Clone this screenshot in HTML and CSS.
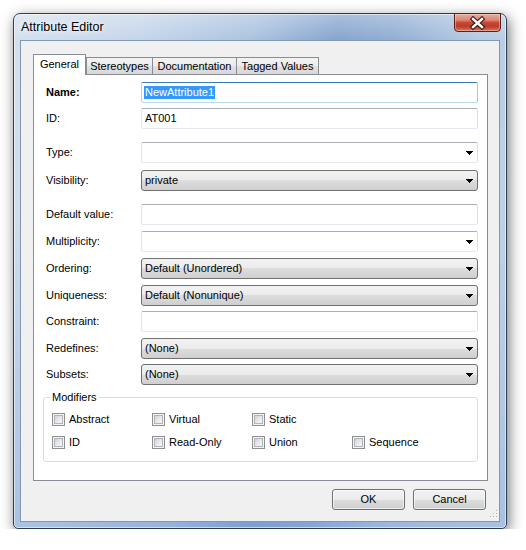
FILE: index.html
```html
<!DOCTYPE html>
<html>
<head>
<meta charset="utf-8">
<title>Attribute Editor</title>
<link rel="stylesheet" href="styles.css">
</head>
<body>
<div class="window">
  <div class="titlebar"><span class="title">Attribute Editor</span></div>
  <div class="close">
    <svg width="45" height="18" viewBox="0 0 45 18">
      <path d="M18 5 L27 13 M27 5 L18 13" stroke="#3a1712" stroke-width="4.6" stroke-linecap="square" fill="none"/>
      <path d="M18 5 L27 13 M27 5 L18 13" stroke="#ffffff" stroke-width="2.4" stroke-linecap="square" fill="none"/>
    </svg>
  </div>
  <div class="client">
    <div class="tabs">
      <div class="tab active w-general">General</div>
      <div class="tab w-stereo">Stereotypes</div>
      <div class="tab w-doc">Documentation</div>
      <div class="tab w-tag">Tagged Values</div>
    </div>
    <div class="panel">
      <div class="row"><span class="lbl bold">Name:</span><div class="field text focus"><span class="sel">NewAttribute1</span></div></div>
      <div class="row"><span class="lbl">ID:</span><div class="field text"><span>AT001</span></div></div>
      <div class="row m8"><span class="lbl">Type:</span><div class="field text"><span></span><svg class="arrow" width="7" height="4" viewBox="0 0 7 4"><path d="M0 0h7v1h-1v1h-1v1h-1v1h-1v-1h-1v-1h-1v-1h-1z"/></svg></div></div>
      <div class="row m2"><span class="lbl">Visibility:</span><div class="field list"><span>private</span><svg class="arrow" width="7" height="4" viewBox="0 0 7 4"><path d="M0 0h7v1h-1v1h-1v1h-1v1h-1v-1h-1v-1h-1v-1h-1z"/></svg></div></div>
      <div class="row m8"><span class="lbl">Default value:</span><div class="field text"></div></div>
      <div class="row m1"><span class="lbl">Multiplicity:</span><div class="field text"><span></span><svg class="arrow" width="7" height="4" viewBox="0 0 7 4"><path d="M0 0h7v1h-1v1h-1v1h-1v1h-1v-1h-1v-1h-1v-1h-1z"/></svg></div></div>
      <div class="row m1"><span class="lbl">Ordering:</span><div class="field list"><span>Default (Unordered)</span><svg class="arrow" width="7" height="4" viewBox="0 0 7 4"><path d="M0 0h7v1h-1v1h-1v1h-1v1h-1v-1h-1v-1h-1v-1h-1z"/></svg></div></div>
      <div class="row m1"><span class="lbl">Uniqueness:</span><div class="field list"><span>Default (Nonunique)</span><svg class="arrow" width="7" height="4" viewBox="0 0 7 4"><path d="M0 0h7v1h-1v1h-1v1h-1v1h-1v-1h-1v-1h-1v-1h-1z"/></svg></div></div>
      <div class="row"><span class="lbl">Constraint:</span><div class="field text"></div></div>
      <div class="row m1"><span class="lbl">Redefines:</span><div class="field list"><span>(None)</span><svg class="arrow" width="7" height="4" viewBox="0 0 7 4"><path d="M0 0h7v1h-1v1h-1v1h-1v1h-1v-1h-1v-1h-1v-1h-1z"/></svg></div></div>
      <div class="row"><span class="lbl">Subsets:</span><div class="field list"><span>(None)</span><svg class="arrow" width="7" height="4" viewBox="0 0 7 4"><path d="M0 0h7v1h-1v1h-1v1h-1v1h-1v-1h-1v-1h-1v-1h-1z"/></svg></div></div>
      <fieldset class="group">
        <legend>Modifiers</legend>
        <div class="checks">
          <div class="check"><span class="box"><span class="inner"></span></span><span class="ctext">Abstract</span></div>
          <div class="check"><span class="box"><span class="inner"></span></span><span class="ctext">Virtual</span></div>
          <div class="check"><span class="box"><span class="inner"></span></span><span class="ctext">Static</span></div>
          <div class="check"></div>
          <div class="check"><span class="box"><span class="inner"></span></span><span class="ctext">ID</span></div>
          <div class="check"><span class="box"><span class="inner"></span></span><span class="ctext">Read-Only</span></div>
          <div class="check"><span class="box"><span class="inner"></span></span><span class="ctext">Union</span></div>
          <div class="check"><span class="box"><span class="inner"></span></span><span class="ctext">Sequence</span></div>
        </div>
      </fieldset>
    </div>
    <div class="buttons">
      <div class="btn">OK</div>
      <div class="btn">Cancel</div>
    </div>
    <svg class="grip" width="10" height="10" viewBox="0 0 10 10">
      <rect x="8" y="0" width="1" height="1" fill="#b0b0b0"/>
      <rect x="5" y="3" width="1" height="1" fill="#b0b0b0"/><rect x="8" y="3" width="1" height="1" fill="#b0b0b0"/>
      <rect x="2" y="6" width="1" height="1" fill="#b0b0b0"/><rect x="5" y="6" width="1" height="1" fill="#b0b0b0"/><rect x="8" y="6" width="1" height="1" fill="#b0b0b0"/>
      <rect x="9" y="1" width="1" height="1" fill="#ffffff"/>
      <rect x="6" y="4" width="1" height="1" fill="#ffffff"/><rect x="9" y="4" width="1" height="1" fill="#ffffff"/>
      <rect x="3" y="7" width="1" height="1" fill="#ffffff"/><rect x="6" y="7" width="1" height="1" fill="#ffffff"/><rect x="9" y="7" width="1" height="1" fill="#ffffff"/>
    </svg>
  </div>
</div>
</body>
</html>
```

FILE: styles.css
```css
* { box-sizing: border-box; }
html, body { margin: 0; padding: 0; background: #ffffff; }
body {
  padding: 13px 0 0 13px;
  font-family: "Liberation Sans", Arial, sans-serif;
  font-size: 11px;
  color: #000;
}
.window {
  position: relative;
  width: 494px;
  height: 516px;
  border: 1px solid #2c3d52;
  border-radius: 7px 7px 5px 5px;
  padding: 0 6px 6px;
  display: flex;
  flex-direction: column;
  background:
    linear-gradient(rgba(255,255,255,0.3), rgba(255,255,255,0) 26px),
    linear-gradient(rgba(120,160,215,0) 40%, rgba(110,150,210,0.35) 100%),
    linear-gradient(100deg, #d4e0ee 0%, #c5d6ea 22%, #abc2df 42%, #86a5cd 56%, #92aed3 66%, #b5cae3 80%, #c8d8ea 100%);
  box-shadow: inset 0 0 0 1px rgba(255,255,255,0.55), 2px 4px 14px rgba(0,0,0,0.55);
}
.titlebar {
  height: 26px;
  display: flex;
  align-items: center;
  padding: 0 0 1px 1px;
}
.title {
  font-size: 12.5px;
  color: #000;
  text-shadow: 0 0 5px #fff, 0 0 9px rgba(255,255,255,0.8);
}
.close {
  position: absolute;
  top: -1px;
  right: 5px;
  width: 47px;
  height: 19px;
  border: 1px solid #5a2018;
  border-radius: 0 0 4px 4px;
  background: linear-gradient(#e9ab9f 0%, #d98a78 35%, #c64a36 50%, #bd3b27 72%, #d5765e 100%);
  box-shadow: inset 0 0 0 1px rgba(255,220,210,0.45);
}
.close svg { display: block; }
.client {
  position: relative;
  flex: 1;
  border: 1px solid #8297b2;
  background: #f0f0f0;
  padding: 13px 11px 0 12px;
}
.tabs {
  display: flex;
  align-items: flex-end;
  height: 20px;
}
.tab {
  height: 17px;
  line-height: 16px;
  border: 1px solid #898c95;
  border-bottom: none;
  text-align: center;
  white-space: nowrap;
  background: linear-gradient(#f3f3f3 0%, #ececec 50%, #e1e1e1 50%, #d8d8d8 100%);
  margin-left: -1px;
}
.tab.active {
  height: 21px;
  line-height: 18px;
  margin-bottom: -1px;
  margin-left: 0;
  background: #fff;
  position: relative;
  z-index: 1;
}
.w-general { width: 53px; }
.w-stereo { width: 67px; margin-left: 0; }
.w-doc { width: 85px; }
.w-tag { width: 83px; }
.panel {
  width: 455px;
  height: 407px;
  border: 1px solid #898c95;
  background: #fff;
  padding: 7px 9px 0 12px;
  display: flex;
  flex-direction: column;
  gap: 5px;
}
.row {
  display: flex;
  align-items: center;
  height: 21px;
}
.m1 { margin-top: 1px; }
.m2 { margin-top: 2px; }
.m8 { margin-top: 8px; }
.lbl {
  width: 95px;
  flex: none;
  line-height: 13px;
  margin-bottom: 1px;
}
.bold { font-weight: bold; }
.field {
  width: 337px;
  height: 21px;
  flex: none;
  display: flex;
  align-items: center;
  justify-content: space-between;
  padding: 0 4px 1px 3px;
  line-height: 13px;
  white-space: nowrap;
}
.text {
  background: #fff;
  border: 1px solid;
  border-color: #abadb3 #dbdfe6 #e3e9ef #e2e3ea;
  border-radius: 2px;
}
.text.focus {
  border-color: #3d7bad #a4c9e3 #b7d9ed #b5cfe7;
}
.list {
  border: 1px solid #707070;
  border-radius: 3px;
  background: linear-gradient(#f2f2f2 0%, #ebebeb 50%, #dddddd 50%, #cfcfcf 100%);
}
.arrow { display: block; flex: none; shape-rendering: crispEdges; margin-top: 1px; }
.arrow path { fill: #000; }
.sel {
  background: #3399ff;
  color: #fff;
  line-height: 13px;
  padding: 0 1px;
  margin-left: -1px;
}
.group {
  margin: 1px 0 0 -3px;
  width: 435px;
  min-width: 0;
  padding: 9px 8px 12px;
  border: 1px solid #d5dfe5;
  border-radius: 3px;
}
.group legend {
  padding: 0 2px;
  margin-left: -2px;
  line-height: 13px;
  font-size: 11px;
}
.checks {
  display: grid;
  grid-template-columns: repeat(4, 100px);
  row-gap: 10px;
}
.check {
  display: flex;
  align-items: center;
  gap: 4px;
  height: 13px;
  white-space: nowrap;
}
.ctext {
  line-height: 13px;
  margin-bottom: 1px;
}
.box {
  width: 13px;
  height: 13px;
  flex: none;
  border: 1px solid #8e8f8f;
  background: #f4f4f4;
  padding: 1px;
}
.inner {
  display: block;
  width: 9px;
  height: 9px;
  border: 1px solid #b1b5bb;
  background: linear-gradient(135deg, #d0d3d8 0%, #e6e7e9 50%, #f8f8f8 100%);
}
.buttons {
  width: 455px;
  display: flex;
  justify-content: flex-end;
  gap: 8px;
  padding-right: 2px;
  margin-top: 8px;
}
.btn {
  width: 73px;
  height: 21px;
  border: 1px solid #707070;
  border-radius: 3px;
  background: linear-gradient(#f2f2f2 0%, #ebebeb 50%, #dddddd 50%, #cfcfcf 100%);
  box-shadow: inset 0 0 0 1px rgba(255,255,255,0.6);
  text-align: center;
  line-height: 19px;
}
.grip {
  position: absolute;
  right: 1px;
  bottom: 1px;
  display: block;
}
```
